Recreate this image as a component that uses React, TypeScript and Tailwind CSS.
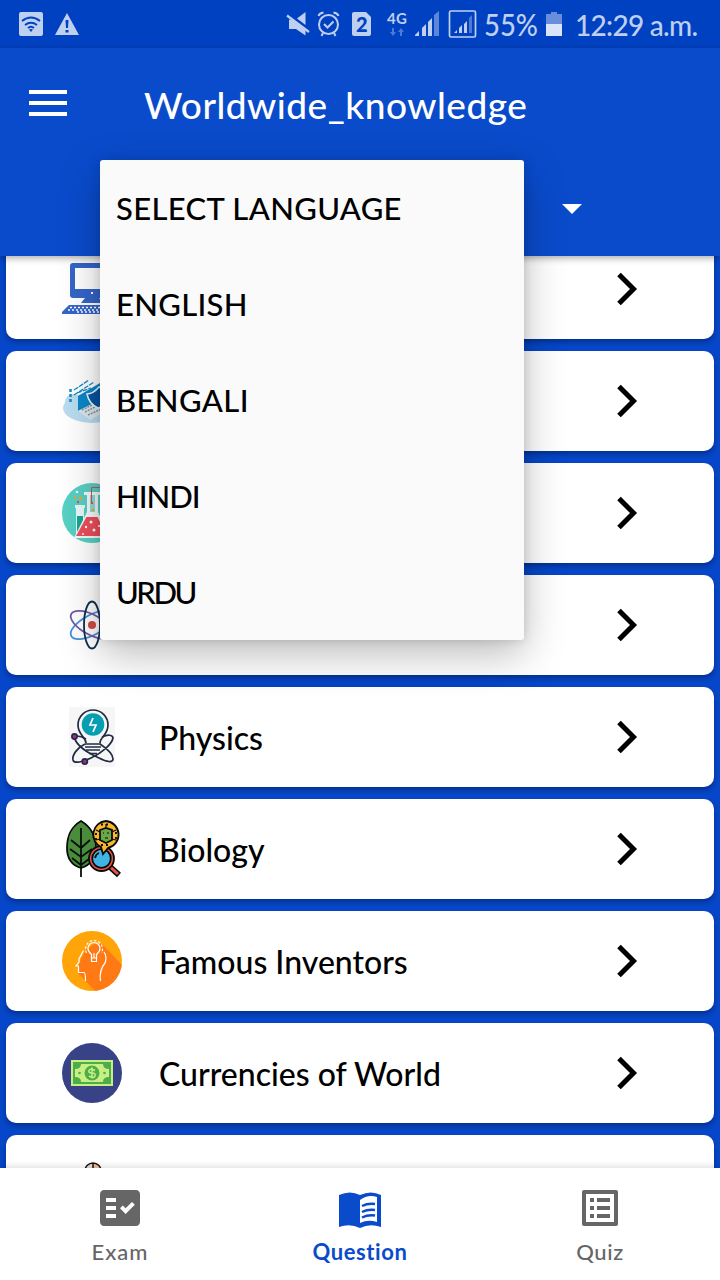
import type { ReactNode } from "react";

type Row = { id: string; label: string; icon: ReactNode };

const Computer = () => (
  <svg viewBox="0 0 60 60" className="size-[60px]">
    <path fill="#3465c8" fillRule="evenodd" d="M11 4h38q3 0 3 3v29q0 3-3 3H37l4 5H19l4-5H11q-3 0-3-3V7q0-3 3-3zm2 5v21h34V9zM29 33v2h2v-2z" />
    <path fill="#3465c8" d="M7 46h46l6 7v2H0v-2z" />
    <path stroke="#fff" strokeWidth="1.4" strokeDasharray="2 2" d="M8 48.500h44M6 51h48M15 53h30" />
  </svg>
);

const Security = () => (
  <svg viewBox="0 0 60 60" className="size-[60px]">
    <ellipse cx="30" cy="37" rx="29" ry="15" fill="#b9dcf0" />
    <ellipse cx="12" cy="31" rx="9" ry="8" fill="#b9dcf0" />
    <path fill="#0b87c9" d="M16 25L38 12v17L16 40z" />
    <path fill="#dbe7ee" d="M16 40l24-12 12 8-24 13z" />
    <path stroke="#8c9499" strokeWidth="1.500" strokeDasharray="2 1" d="M20 39l20-10M23 41l20-10M26 44l20-9" />
    <path fill="#0654a3" stroke="#e9f4fa" strokeWidth="1.500" d="M25 23q6 0 12-7 6 3 13 1 0 17-14 20-9-4-11-14z" />
    <path stroke="#1589c4" strokeWidth="1.300" strokeDasharray="5 1" d="M12 19L27 9M12 24l20-13M15 22l14-5" />
    <path fill="none" stroke="#1589c4" strokeWidth="2.500" strokeDasharray="3 2" d="M8.500 18v15" />
  </svg>
);

const Chemistry = () => (
  <svg viewBox="0 0 60 60" className="size-[60px]">
    <circle cx="30" cy="30" r="30" fill="#57d0c4" />
    <path fill="#e8f8f6" d="M13 22h10v3h-1v26q0 3-4 3t-4-3V25h-1z" />
    <path fill="#17a594" d="M15 33h6v18q0 2-3 2t-3-2z" />
    <path fill="#f4fafa" d="M22 9h16v3h-2v17l12 26H12l13-26V12h-3z" />
    <path fill="#8fdcd5" d="M28 12h5v17h-5z" />
    <path fill="#f04e5c" d="M24.500 34h11l9.500 19H14z" />
    <path fill="none" stroke="#d2505b" d="M29.500 20V4.500H51" />
    <g fill="#fff">
      <circle cx="29" cy="39" r="1.500" />
      <circle cx="24" cy="44" r="1.200" />
      <circle cx="32" cy="47" r="1.500" />
      <circle cx="37" cy="43" r="1" />
      <circle cx="21" cy="51" r="1" />
      <circle cx="15" cy="9" r="1.300" />
    </g>
    <path fill="#f7a32b" d="M17 14h3v3h-3zM12 13h2v2h-2zM30 26h2v2h-2z" />
    <path fill="#e44b58" d="M15 18h2v2h-2zM29 19h2v2h-2z" />
  </svg>
);

const Atom = () => (
  <svg viewBox="0 0 60 60" className="size-[60px]" fill="none" strokeWidth="1.800">
    <ellipse cx="30" cy="30" rx="23.500" ry="10" stroke="#4390dc" transform="rotate(-28 30 30)" />
    <ellipse cx="30" cy="30" rx="23.500" ry="10" stroke="#7158a8" transform="rotate(28 30 30)" />
    <ellipse cx="30" cy="30" rx="8" ry="23.500" stroke="#102f4c" />
    <circle cx="30" cy="30" r="4" fill="#d34a44" />
  </svg>
);

const Physics = () => (
  <svg viewBox="0 0 60 60" className="size-[60px]" fill="none" stroke="#212b43" strokeWidth="1.700">
    <path fill="#f6f6f7" stroke="none" d="M7 0h46v60H7z" />
    <path d="M24 36c0-6-8-8-8-18a15 15 0 0 1 30 0c0 10-8 12-8 18" />
    <circle cx="31" cy="17.500" r="11.300" fill="#069fb2" stroke="none" />
    <path stroke="#fff" d="M31 11l-3 7h6l-3 7" />
    <path d="M23 37h16M23 40h16M24 43h14M27 46.500h8" />
    <path d="M12 30c3 10 14 16 25 21 8 4 14 5 14 1 0-5-7-11-13-15M23 37c-8 4-13 11-12 16 1 4 10 2 18-2 11-5 21-14 22-20 0-3-5-4-11-1M24 32q-5-3-9-3" />
    <circle cx="12.500" cy="29.500" r="2.600" fill="#b3268b" />
    <circle cx="22.800" cy="54.500" r="2.600" fill="#b3268b" />
  </svg>
);

const Biology = () => (
  <svg viewBox="0 0 60 60" className="size-[60px]" fill="none" stroke="#080d0a" strokeWidth="1.800">
    <path fill="#498d3c" d="M19 2c10 6 15 14 15 27 0 9-5 17-15 20C9 46 5 38 5 29 5 16 9 8 19 2z" />
    <path d="M19 9v49M9 21l10 8 9-8M8 30l11 8 11-8M10 39l9 7 8-6" />
    <path strokeWidth="5.800" d="M47 47l10 9" />
    <path stroke="#ed5147" strokeWidth="3" d="M46 46l10 9" />
    <circle cx="39.500" cy="39.500" r="12.500" fill="#ed5147" />
    <circle cx="39.500" cy="39.500" r="9.300" fill="#40b5e5" />
    <path d="M33 39q1-4 4-5" />
    <path fill="#fcb52e" d="M44 2a13.700 13.700 0 0 1 2 27l-5 6-2-7A13.700 13.700 0 0 1 44 2z" />
    <path fill="#69a844" d="M38 11l6-2 6 2v10l-6 3-6-3z" />
    <path strokeDasharray="2 3" d="M34 14v8M54 13v9M39 5.500h10M39 26h9" />
    <path strokeWidth="1.200" d="M44 5v4M34 11l4 2M54 11l-4 2M34 21l4-1M54 21l-4-1M41 14h1M45 14h2M43 19h3" />
  </svg>
);

const Inventor = () => (
  <svg viewBox="0 0 60 60" className="size-[60px]">
    <defs>
      <clipPath id="disc">
        <circle cx="30" cy="30" r="30" />
      </clipPath>
    </defs>
    <circle cx="30" cy="30" r="30" fill="#ffa409" />
    <path fill="#ff7915" clipPath="url(#disc)" d="M40 13l22 23v26H35L16 42l1-9 6-13 9-7z" />
    <g fill="none" stroke="#fff" strokeWidth="1.200">
      <path d="M21.500 19.500l-4.500 8.500v3l-3 4h2.500v6.500H22q1.500 0 1.500 8.500M42 21q3.500 5 1 11-6 7-4.500 18" />
      <path d="M29.500 27v-3.500q-3.500-3-3.500-6a6 6 0 0 1 12 0q0 3-3.500 6V27zM29.500 27v3.500h5V27M32 22v5" />
      <path strokeDasharray="2.500 1.800" d="M24.500 22a8.500 8.500 0 1 1 15 0" />
    </g>
  </svg>
);

const Money = () => (
  <svg viewBox="0 0 60 60" className="size-[60px]">
    <circle cx="30" cy="30" r="30" fill="#374287" />
    <path fill="#c9ef83" d="M9 17h42v26H9z" />
    <path fill="#4cae4b" d="M11 19h38v22H11z" />
    <path fill="#c9ef83" d="M19 21h22q0 5 6 5v8q-6 0-6 5H19q0-5-6-5v-8q6 0 6-5z" />
    <circle cx="30" cy="30" r="7.500" fill="#4cae4b" />
    <circle cx="17.500" cy="30" r="1.300" fill="#4cae4b" />
    <circle cx="42.500" cy="30" r="1.300" fill="#4cae4b" />
    <path fill="none" stroke="#c9ef83" strokeWidth="1.500" d="M33 27.500q-5-2.500-6 0t3 2.500 3 3-6 0M30 24.500v11" />
  </svg>
);

const Partial = () => (
  <svg viewBox="0 0 60 60" className="size-[60px]">
    <circle cx="31" cy="16" r="8" fill="#f2bd94" stroke="#15100e" strokeWidth="1.500" />
    <path fill="#dce1e5" d="M31 9a7 7 0 0 0-7 7h7z" />
    <path stroke="#15100e" strokeWidth="1.500" d="M31 8v12" />
  </svg>
);

const rows: Row[] = [
  { id: "computer", label: "", icon: <Computer /> },
  { id: "security", label: "", icon: <Security /> },
  { id: "chemistry", label: "", icon: <Chemistry /> },
  { id: "atom", label: "", icon: <Atom /> },
  { id: "physics", label: "Physics", icon: <Physics /> },
  { id: "biology", label: "Biology", icon: <Biology /> },
  { id: "inventors", label: "Famous Inventors", icon: <Inventor /> },
  { id: "currencies", label: "Currencies of World", icon: <Money /> },
  { id: "last", label: "", icon: <Partial /> },
];

const languages = [
  { name: "SELECT LANGUAGE", tracking: "tracking-[0.33px]" },
  { name: "ENGLISH", tracking: "tracking-[0.3px]" },
  { name: "BENGALI", tracking: "tracking-[0.4px]" },
  { name: "HINDI", tracking: "tracking-[-1px]" },
  { name: "URDU", tracking: "tracking-[-2.5px]" },
];

const StatusBar = () => (
  <div className="flex h-12 shrink-0 items-center bg-[#0041c2]">
    <svg viewBox="0 0 720 48" className="h-12 w-full" fill="#bfcff0">
      <rect x="19" y="12" width="24" height="24" rx="2" />
      <path fill="none" stroke="#0041c2" strokeWidth="2" d="M22 21q9-7 18 0M25 25q6-4.500 12 0M28 28q3-2.500 6 0" />
      <path fill="#0041c2" d="M29 29.500q2-1 4 0l-2 2.500z" />
      <path d="M67 13l12 22H55z" />
      <path fill="#0041c2" d="M65.500 20h3l-.5 8h-2zM65.500 30h3v2.500h-3z" />
      <path d="M305.500 12v13l-8.500-6.500zM289 19.500l4 .5 12.500 9v6.500L296 29h-7z" />
      <path stroke="#bfcff0" strokeWidth="2.200" d="M287 15.500l22 16.500" />
      <g fill="none" stroke="#bfcff0" strokeWidth="2">
        <circle cx="328.500" cy="24.500" r="9.500" />
        <path d="M324 24l3.500 3.500 6-6M318.500 16q1-3 5-3.500M338.500 16q-1-3-5-3.500M323 33l-1.500 3M334 33l1.500 3" />
      </g>
      <path d="M354 12h12l5 5v17q0 2-2 2h-15q-2 0-2-2V14q0-2 2-2z" />
      <path fill="#4d7bd4" d="M392 28h2v4h2l-3 4-3-4h2zM400 36h2v-4h2l-3-4-3 4h2z" />
      <path d="M415 36v-1l4-4v5zM422 36v-8l4-4v12zM428 36V22l4-4v18z" />
      <path fill="#5c86d9" d="M434 36V15l5-4v25z" />
      <rect x="449.500" y="11" width="26" height="26" rx="1.500" fill="none" stroke="#bfcff0" strokeWidth="1.700" />
      <path d="M454 33l3-3v3zM459 33v-5l3-3v8zM464 33v-9l3-3v12z" />
      <path fill="#4d7bd4" d="M469 33V18l3-3v18z" />
      <path fill="#688edc" d="M548 14h3v-2h6v2h5v10h-16V14z" />
      <path fill="#dce5f7" d="M546 24h16v12h-16z" />
      <g fontFamily="Lato, sans-serif">
        <text x="356" y="31.500" fontSize="20" fontWeight="900" fill="#0041c2" textLength="12">2</text>
        <text x="387" y="24" fontSize="15" fontWeight="700" textLength="20">4G</text>
        <text x="484" y="36" fontSize="30" fontWeight="500" textLength="54" lengthAdjust="spacingAndGlyphs">55%</text>
        <text x="575" y="36" fontSize="28" fontWeight="500" textLength="123">12:29 a.m.</text>
      </g>
    </svg>
  </div>
);

const Menu = () => (
  <div className="absolute left-[100px] top-40 z-20 w-[424px] rounded-[3px] bg-[#fafafa] shadow-[0_14px_42px_rgba(0,0,0,0.27),0_0_10px_rgba(0,0,0,0.14)]">
    {languages.map((l) => (
      <div key={l.name} className="flex h-24 items-center px-4 text-[31px] font-medium leading-none text-black">
        <span className={l.tracking}>{l.name}</span>
      </div>
    ))}
  </div>
);

const ListRow = ({ row }: { row: Row }) => (
  <div className="mx-1.5 flex h-[100px] shrink-0 items-center rounded-[10px] bg-white pl-14 pr-[74px] shadow-[0_3px_5px_rgba(0,0,0,0.3)]">
    {row.icon}
    <span className="ml-[37px] flex-1 pt-0.5 text-[32px] font-medium text-black">{row.label}</span>
    <svg viewBox="0 0 24 36" className="h-9 w-6" fill="none" stroke="#000" strokeWidth="5">
      <path d="M3 3.500L17.500 18 3 32.500" />
    </svg>
  </div>
);

const BottomNav = () => (
  <nav className="relative z-10 flex h-28 shrink-0 bg-white text-[22px] text-[#666] shadow-[0_-2px_6px_rgba(0,0,0,0.12)]">
    <div className="flex w-60 flex-col items-center pt-4">
      <svg viewBox="0 0 24 24" className="size-12" fill="currentColor">
        <path fillRule="evenodd" d="M20 3H4C2.900 3 2 3.900 2 5v14c0 1.100.9 2 2 2h16c1.100 0 2-.9 2-2V5c0-1.100-.9-2-2-2zM10 17H5v-2h5zm0-4H5v-2h5zm0-4H5V7h5zm4.820 6L12 12.160l1.410-1.410 1.410 1.420L17.990 9l1.420 1.420z" />
      </svg>
      <span className="mt-1 font-medium leading-8 tracking-[1px]">Exam</span>
    </div>
    <div className="flex w-60 flex-col items-center pt-4 text-[#0a4bcc]">
      <svg viewBox="0 0 48 48" className="size-12">
        <path fill="currentColor" d="M3 11q11-5 21 0 11-5 21 0v32q-11-4-21 1-10-5-21-1z" />
        <path fill="#fff" d="M24 16q8-6 17-3v25q-9-3-17 1z" />
        <path fill="none" stroke="currentColor" strokeWidth="2.500" d="M26 22q6-3 13-2M26 28q6-3 13-2M26 33.500q6-3 13-2" />
      </svg>
      <span className="mt-1 font-bold leading-8 tracking-[0.6px]">Question</span>
    </div>
    <div className="flex w-60 flex-col items-center pt-4">
      <svg viewBox="0 0 48 48" className="size-12" fill="currentColor">
        <path fillRule="evenodd" d="M8 6h32q2 0 2 2v32q0 2-2 2H8q-2 0-2-2V8q0-2 2-2zm2 4v28h28V10z" />
        <path d="M14 14h4v4h-4zM21 14h13v4H21zM14 22h4v4h-4zM21 22h13v4H21zM14 30h4v4h-4zM21 30h13v4H21z" />
      </svg>
      <span className="mt-1 font-medium leading-8 tracking-[0.6px]">Quiz</span>
    </div>
  </nav>
);

export default function App() {
  return (
    <div className="relative flex h-[1280px] w-[720px] flex-col overflow-hidden bg-[#0646c8] font-['Lato',sans-serif]">
      <StatusBar />
      <header className="relative z-10 h-52 shrink-0 bg-[#0a4bcc] shadow-[0_2px_7px_rgba(0,0,0,0.35)]">
        <div className="flex h-28 items-center pl-[29px] text-white">
          <div className="mb-0.5 flex w-[38px] flex-col gap-[7px]">
            <i className="h-1 bg-white" />
            <i className="h-1 bg-white" />
            <i className="h-1 bg-white" />
          </div>
          <h1 className="ml-[77px] pt-0.5 text-[37px] font-medium tracking-[0.5px]">Worldwide_knowledge</h1>
        </div>
        <div className="flex h-24 items-center pl-[562px] pt-0.5">
          <svg viewBox="0 0 20 10" className="h-2.5 w-5" fill="#fff">
            <path d="M0 0h20L10 10z" />
          </svg>
        </div>
      </header>
      <main className="min-h-0 flex-1 overflow-hidden">
        <div className="-mt-[17px] flex flex-col gap-3">
          {rows.map((row) => (
            <ListRow key={row.id} row={row} />
          ))}
        </div>
      </main>
      <BottomNav />
      <Menu />
    </div>
  );
}
